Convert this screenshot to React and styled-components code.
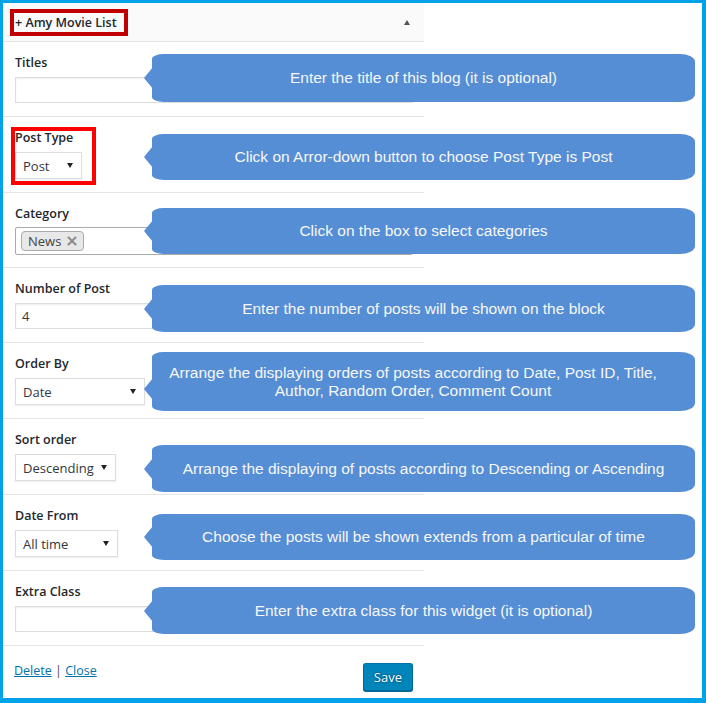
import styled, { createGlobalStyle } from "styled-components";

const GlobalStyle = createGlobalStyle`
  html, body {
    margin: 0;
    padding: 0;
    background: #fff;
    font-family: "Open Sans", "Noto Sans", sans-serif;
  }
`;

const rows = [
  { label: "Titles", kind: "text", value: "", top: 12, height: 48, note: "Enter the title of this blog (it is optional)" },
  { label: "Post Type", kind: "select", value: "Post", width: 67, marked: true, top: 17, height: 46, note: "Click on Arror-down button to choose Post Type is Post" },
  { label: "Category", kind: "tags", value: "News", top: 15, height: 46, note: "Click on the box to select categories" },
  { label: "Number of Post", kind: "text", value: "4", top: 17, height: 47, note: "Enter the number of posts will be shown on the block" },
  {
    label: "Order By",
    kind: "select",
    value: "Date",
    width: 130,
    top: 9,
    height: 59,
    pointer: 37,
    shift: 7,
    note: "Arrange the displaying orders of posts according to Date, Post ID, Title, Author, Random Order, Comment Count",
  },
  { label: "Sort order", kind: "select", value: "Descending", width: 101, top: 26, height: 47, note: "Arrange the displaying of posts according to Descending or Ascending" },
  { label: "Date From", kind: "select", value: "All time", width: 103, top: 19, height: 46, note: "Choose the posts will be shown extends from a particular of time" },
  { label: "Extra Class", kind: "text", value: "", top: 16, height: 47, note: "Enter the extra class for this widget (it is optional)" },
];

function Field({ row }) {
  if (row.kind === "select") {
    return (
      <SelectBox width={row.width}>
        <span>{row.value}</span>
        <Caret />
      </SelectBox>
    );
  }
  if (row.kind === "tags") {
    return (
      <TagBox>
        <Tag>
          {row.value}
          <TagRemove>×</TagRemove>
        </Tag>
      </TagBox>
    );
  }
  return <TextInput defaultValue={row.value} readOnly />;
}

export default function App() {
  return (
    <>
      <GlobalStyle />
      <Frame>
        <Panel>
          <Header>
            <HeaderMark>+ Amy Movie List</HeaderMark>
            <UpArrow />
          </Header>
          {rows.map((row) => (
            <Row key={row.label}>
              {row.marked ? (
                <Highlight>
                  <Label>{row.label}</Label>
                  <Field row={row} />
                </Highlight>
              ) : (
                <>
                  <Label>{row.label}</Label>
                  <Field row={row} />
                </>
              )}
              <Callout
                top={row.top}
                height={row.height}
                pointer={row.pointer ?? row.height / 2}
                shift={row.shift ?? 0}
              >
                {row.note}
              </Callout>
            </Row>
          ))}
          <Footer>
            <Links>
              <Link href="#">Delete</Link> <Pipe>|</Pipe> <Link href="#">Close</Link>
            </Links>
            <SaveButton>Save</SaveButton>
          </Footer>
        </Panel>
      </Frame>
    </>
  );
}

const Frame = styled.div`
  box-sizing: border-box;
  width: 706px;
  height: 703px;
  border-style: solid;
  border-color: #00a2e8;
  border-width: 3px 4px 5px 3px;
  background: #fff;
`;

const Panel = styled.div`
  width: 421px;
`;

const Header = styled.div`
  height: 38px;
  display: flex;
  align-items: center;
  justify-content: space-between;
  padding: 0 14px 0 7px;
  background: #fafafa;
  border-bottom: 1px solid #e5e5e5;
`;

const HeaderMark = styled.div`
  box-sizing: border-box;
  width: 118px;
  height: 27px;
  display: flex;
  align-items: center;
  padding-left: 1px;
  border: 4px solid #c00000;
  font-size: 12.5px;
  font-weight: 600;
  color: #23282d;
  white-space: nowrap;
`;

const UpArrow = styled.span`
  width: 0;
  height: 0;
  border-left: 3.5px solid transparent;
  border-right: 3.5px solid transparent;
  border-bottom: 5px solid #555;
`;

const Row = styled.div`
  position: relative;
  padding: 12px 11px 13px 12px;
  border-bottom: 1px solid #e5e5e5;
`;

const Highlight = styled.div`
  position: relative;
  width: 67px;

  &::after {
    content: "";
    position: absolute;
    left: -4px;
    top: -2px;
    right: -14px;
    bottom: -6px;
    border: 4px solid #ff0000;
  }
`;

const Label = styled.div`
  font-size: 12.5px;
  font-weight: 600;
  line-height: 18px;
  margin-bottom: 5px;
  color: #23282d;
  white-space: nowrap;
`;

const TextInput = styled.input`
  box-sizing: border-box;
  display: block;
  width: 100%;
  height: 26px;
  margin: 0;
  padding: 0 6px;
  border: 1px solid #ddd;
  box-shadow: inset 0 1px 2px rgba(0, 0, 0, 0.07);
  font-family: inherit;
  font-size: 13px;
  color: #32373c;
  outline: none;
`;

const SelectBox = styled.div`
  box-sizing: border-box;
  width: ${(props) => props.width}px;
  height: 27px;
  display: flex;
  align-items: center;
  justify-content: space-between;
  padding: 0 8px 0 7px;
  border: 1px solid #ddd;
  box-shadow: 0 1px 2px rgba(0, 0, 0, 0.07);
  font-size: 13px;
  color: #32373c;
`;

const Caret = styled.span`
  width: 0;
  height: 0;
  border-left: 3px solid transparent;
  border-right: 3px solid transparent;
  border-top: 5px solid #222;
`;

const TagBox = styled.div`
  box-sizing: border-box;
  height: 28px;
  margin: -1px 0;
  display: flex;
  align-items: center;
  padding-left: 5px;
  border: 1px solid #aaa;
  border-radius: 2px;
  background: #fff;
`;

const Tag = styled.span`
  box-sizing: border-box;
  height: 20px;
  display: flex;
  align-items: center;
  gap: 4px;
  padding: 0 4px 0 6px;
  border: 1px solid #aaa;
  border-radius: 4px;
  background: #e8e8e8;
  font-size: 13px;
  color: #444;
`;

const TagRemove = styled.span`
  font-family: "DejaVu Sans", sans-serif;
  font-size: 16px;
  font-weight: 700;
  color: #888;
  line-height: 1;
`;

const Callout = styled.div`
  position: absolute;
  left: 149px;
  top: ${(props) => props.top}px;
  width: 543px;
  height: ${(props) => props.height}px;
  box-sizing: border-box;
  display: flex;
  align-items: center;
  justify-content: center;
  padding: 0 ${(props) => 20 + props.shift * 2}px 0 ${(props) => 20 - props.shift}px;
  background: #558ed5;
  border-radius: 12px 15px 15px 12px / 5px 8px 8px 5px;
  font-family: "Liberation Sans", Arial, sans-serif;
  font-size: 15.5px;
  line-height: 18px;
  text-align: center;
  color: #f7f7f7;
  z-index: 1;

  &::before {
    content: "";
    position: absolute;
    left: -8px;
    top: ${(props) => props.pointer - 11}px;
    border-style: solid;
    border-width: 11px 9px 11px 0;
    border-color: transparent #558ed5 transparent transparent;
  }
`;

const Footer = styled.div`
  display: flex;
  justify-content: space-between;
  align-items: flex-start;
  padding: 16px 11px 0 11px;
`;

const Links = styled.div`
  font-size: 12.5px;
  line-height: 18px;
  color: #555d66;
`;

const Link = styled.a`
  color: #0073aa;
  text-decoration: underline;
`;

const Pipe = styled.span`
  color: #50465f;
`;

const SaveButton = styled.button`
  box-sizing: border-box;
  height: 28px;
  margin-top: 1px;
  padding: 0 10px;
  border: 1px solid #0073aa;
  border-color: #0073aa #006799 #006799;
  border-radius: 3px;
  background: #0085ba;
  box-shadow: 0 1px 0 #006799;
  font-family: inherit;
  font-size: 13px;
  color: #fff;
  text-shadow: 0 -1px 1px #006799, 1px 0 1px #006799, 0 1px 1px #006799, -1px 0 1px #006799;
  cursor: pointer;
`;
